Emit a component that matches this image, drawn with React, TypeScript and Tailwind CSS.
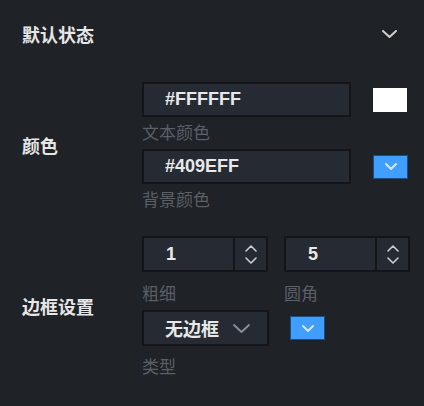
import React from "react";

const cjk = { fontFamily: '"Noto Sans CJK SC", "Liberation Sans", sans-serif' };
const latin = { fontFamily: '"Liberation Sans", "Noto Sans CJK SC", sans-serif' };

function Chevron({ className, w = 14, h = 8, sw = 2 }: { className?: string; w?: number; h?: number; sw?: number }) {
  return (
    <svg width={w} height={h} viewBox={`0 0 ${w} ${h}`} className={className} fill="none">
      <path d={`M1 1 L${w / 2} ${h - 1} L${w - 1} 1`} stroke="currentColor" strokeWidth={sw} strokeLinecap="round" strokeLinejoin="round" />
    </svg>
  );
}

function Spinner() {
  return (
    <div className="flex w-[33px] flex-col items-center justify-center gap-[5px] border-l-2 border-[#131519] text-[#c9ccd1]">
      <svg width="12" height="7" viewBox="0 0 12 7" fill="none">
        <path d="M1 6 L6 1 L11 6" stroke="currentColor" strokeWidth="1.6" strokeLinecap="round" strokeLinejoin="round" />
      </svg>
      <svg width="12" height="7" viewBox="0 0 12 7" fill="none">
        <path d="M1 1 L6 6 L11 1" stroke="currentColor" strokeWidth="1.6" strokeLinecap="round" strokeLinejoin="round" />
      </svg>
    </div>
  );
}

function TextBox({ value }: { value: string }) {
  return (
    <div className="flex h-[35px] w-[209px] items-center border-2 border-[#131519] bg-[#262b33] pl-[21px]">
      <span className="text-[18px] font-bold text-[#e8e8e8]" style={latin}>{value}</span>
    </div>
  );
}

function NumBox({ value }: { value: string }) {
  return (
    <div className="flex h-[36px] w-[126px] border-2 border-[#131519] bg-[#262b33]">
      <div className="flex flex-1 items-center pl-[22px]">
        <span className="text-[18px] font-bold text-[#e8e8e8]" style={latin}>{value}</span>
      </div>
      <Spinner />
    </div>
  );
}

function Sub({ children }: { children: React.ReactNode }) {
  return (
    <div className="text-[17px] leading-[20px] text-[#5b5f66]" style={cjk}>{children}</div>
  );
}

function BlueSwatch({ className }: { className?: string }) {
  return (
    <div className={`flex h-[24px] w-[35px] items-center justify-center border border-[#1a4f86] bg-[#409eff] text-[#cfe5ff] ${className ?? ""}`}>
      <Chevron w={12} h={7} sw={2} />
    </div>
  );
}

export default function App() {
  return (
    <div className="h-[406px] w-[424px] overflow-hidden bg-[#1f2227]" style={cjk}>
      {/* header */}
      <div className="flex h-[68px] items-center justify-between pl-[22px] pr-[27px]">
        <span className="text-[18px] font-bold text-[#e6e6e6]">默认状态</span>
        <Chevron className="text-[#cfcfcf]" w={15} h={8} sw={2} />
      </div>

      {/* color row */}
      <div className="flex pt-[14px]">
        <div className="flex w-[142px] items-center pl-[22px]">
          <span className="text-[18px] font-bold text-[#e6e6e6]">颜色</span>
        </div>
        <div className="flex flex-col">
          <div className="flex items-center">
            <TextBox value="#FFFFFF" />
            <div className="ml-[22px] h-[24px] w-[34px] bg-white" />
          </div>
          <div className="mt-[5px]"><Sub>文本颜色</Sub></div>
          <div className="mt-[7px] flex items-center">
            <TextBox value="#409EFF" />
            <BlueSwatch className="ml-[22px]" />
          </div>
          <div className="mt-[5px]"><Sub>背景颜色</Sub></div>
        </div>
      </div>

      {/* border row */}
      <div className="flex pt-[27px]">
        <div className="flex w-[142px] items-center pl-[22px]">
          <span className="text-[18px] font-bold text-[#e6e6e6]">边框设置</span>
        </div>
        <div className="flex flex-col">
          <div className="flex gap-[16px]">
            <div className="flex flex-col">
              <NumBox value="1" />
              <div className="mt-[11px]"><Sub>粗细</Sub></div>
            </div>
            <div className="flex flex-col">
              <NumBox value="5" />
              <div className="mt-[11px]"><Sub>圆角</Sub></div>
            </div>
          </div>
          <div className="mt-[7px] flex items-center">
            <div className="flex h-[36px] w-[127px] items-center border-2 border-[#131519] bg-[#262b33] pl-[21px]">
              <span className="text-[18px] font-bold text-[#e8e8e8]">无边框</span>
              <Chevron className="ml-[14px] text-[#8c9097]" w={17} h={9} sw={1.8} />
            </div>
            <BlueSwatch className="ml-[21px]" />
          </div>
          <div className="mt-[10px]"><Sub>类型</Sub></div>
        </div>
      </div>
    </div>
  );
}
